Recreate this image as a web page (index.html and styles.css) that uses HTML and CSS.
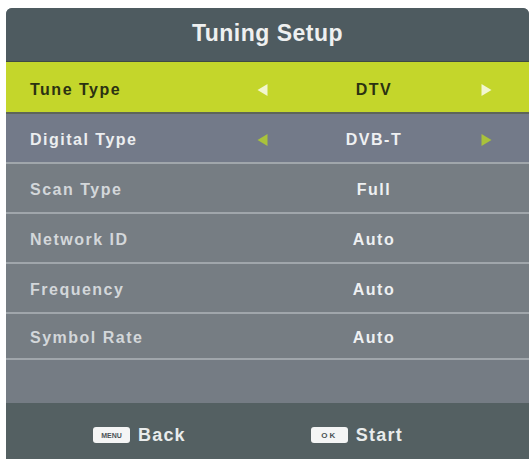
FILE: index.html
```html
<!DOCTYPE html>
<html>
<head>
<meta charset="utf-8">
<link rel="stylesheet" href="styles.css">
</head>
<body>
<div class="panel">
  <div class="header">Tuning Setup</div>
  <div class="rows">
    <div class="row row-active">
      <span class="label">Tune Type</span>
      <svg class="arrow" viewBox="0 0 10 12"><polygon points="10,0 10,12 0,6"/></svg>
      <span class="value">DTV</span>
      <svg class="arrow" viewBox="0 0 10 12"><polygon points="0,0 0,12 10,6"/></svg>
    </div>
    <div class="row row-digital">
      <span class="label">Digital Type</span>
      <svg class="arrow" viewBox="0 0 10 12"><polygon points="10,0 10,12 0,6"/></svg>
      <span class="value">DVB-T</span>
      <svg class="arrow" viewBox="0 0 10 12"><polygon points="0,0 0,12 10,6"/></svg>
    </div>
    <div class="row">
      <span class="label">Scan Type</span>
      <span class="spacer"></span>
      <span class="value">Full</span>
      <span class="spacer"></span>
    </div>
    <div class="row">
      <span class="label">Network ID</span>
      <span class="spacer"></span>
      <span class="value">Auto</span>
      <span class="spacer"></span>
    </div>
    <div class="row">
      <span class="label">Frequency</span>
      <span class="spacer"></span>
      <span class="value">Auto</span>
      <span class="spacer"></span>
    </div>
    <div class="row row-last">
      <span class="label">Symbol Rate</span>
      <span class="spacer"></span>
      <span class="value">Auto</span>
      <span class="spacer"></span>
    </div>
    <div class="empty"></div>
  </div>
  <div class="footer">
    <div class="hint"><span class="key key-menu">MENU</span><span class="hint-text">Back</span></div>
    <div class="hint"><span class="key key-ok">OK</span><span class="hint-text">Start</span></div>
  </div>
</div>
</body>
</html>
```

FILE: styles.css
```css
html, body {
  margin: 0;
  padding: 0;
  background: #ffffff;
  overflow: hidden;
}

body {
  font-family: "Liberation Sans", Arial, sans-serif;
  padding: 8px 2px 0 6px;
}

.panel {
  width: 523px;
  height: 451px;
  display: flex;
  flex-direction: column;
  border-radius: 6px 6px 0 0;
  overflow: hidden;
  background: #757c83;
}

.header {
  height: 54px;
  background: #4e5b60;
  border-bottom: 1px solid #3f4a45;
  color: #eef0f0;
  font-size: 23px;
  font-weight: bold;
  letter-spacing: 0.5px;
  display: flex;
  align-items: center;
  justify-content: center;
  padding-bottom: 2px;
  box-sizing: border-box;
}

.rows {
  display: flex;
  flex-direction: column;
  flex: 1;
}

.row {
  display: grid;
  grid-template-columns: 251px 10px 214px 10px 1fr;
  align-items: center;
  height: 45px;
  padding-top: 3px;
  box-sizing: content-box;
  border-bottom: 2px solid #a0a6ab;
  background: #767d83;
  color: #d3d7da;
  font-size: 16px;
  font-weight: bold;
  letter-spacing: 1.5px;
}

.row-active {
  height: 45px;
  padding-top: 5px;
  background: #c4d62b;
  color: #2b3212;
  border-bottom: 2px solid #5e6558;
}

.row-digital {
  background: #737a89;
  color: #eceef0;
}

.row-last {
  height: 41px;
}

.label {
  padding-left: 24px;
}

.value {
  text-align: center;
  color: #eef0f2;
}

.row-active .value {
  color: #2b3212;
}

.arrow {
  width: 11px;
  height: 12px;
  fill: #a9c23b;
}

.row-active .arrow {
  fill: #f2f6cf;
}

.empty {
  flex: 1;
  background: #757c84;
}

.footer {
  height: 56px;
  background: #546062;
  display: flex;
  align-items: center;
  gap: 125px;
  padding-left: 87px;
  padding-top: 8px;
  box-sizing: border-box;
}

.hint {
  display: flex;
  align-items: center;
  gap: 8px;
}

.key {
  width: 37px;
  height: 16px;
  background: #f4f5f5;
  border-radius: 3px;
  color: #4a5356;
  font-size: 7px;
  font-weight: bold;
  display: flex;
  align-items: center;
  justify-content: center;
}

.key-ok {
  letter-spacing: 2px;
  font-size: 8px;
}

.hint-text {
  color: #e9ecec;
  font-size: 18px;
  font-weight: bold;
  letter-spacing: 1.2px;
}
```
